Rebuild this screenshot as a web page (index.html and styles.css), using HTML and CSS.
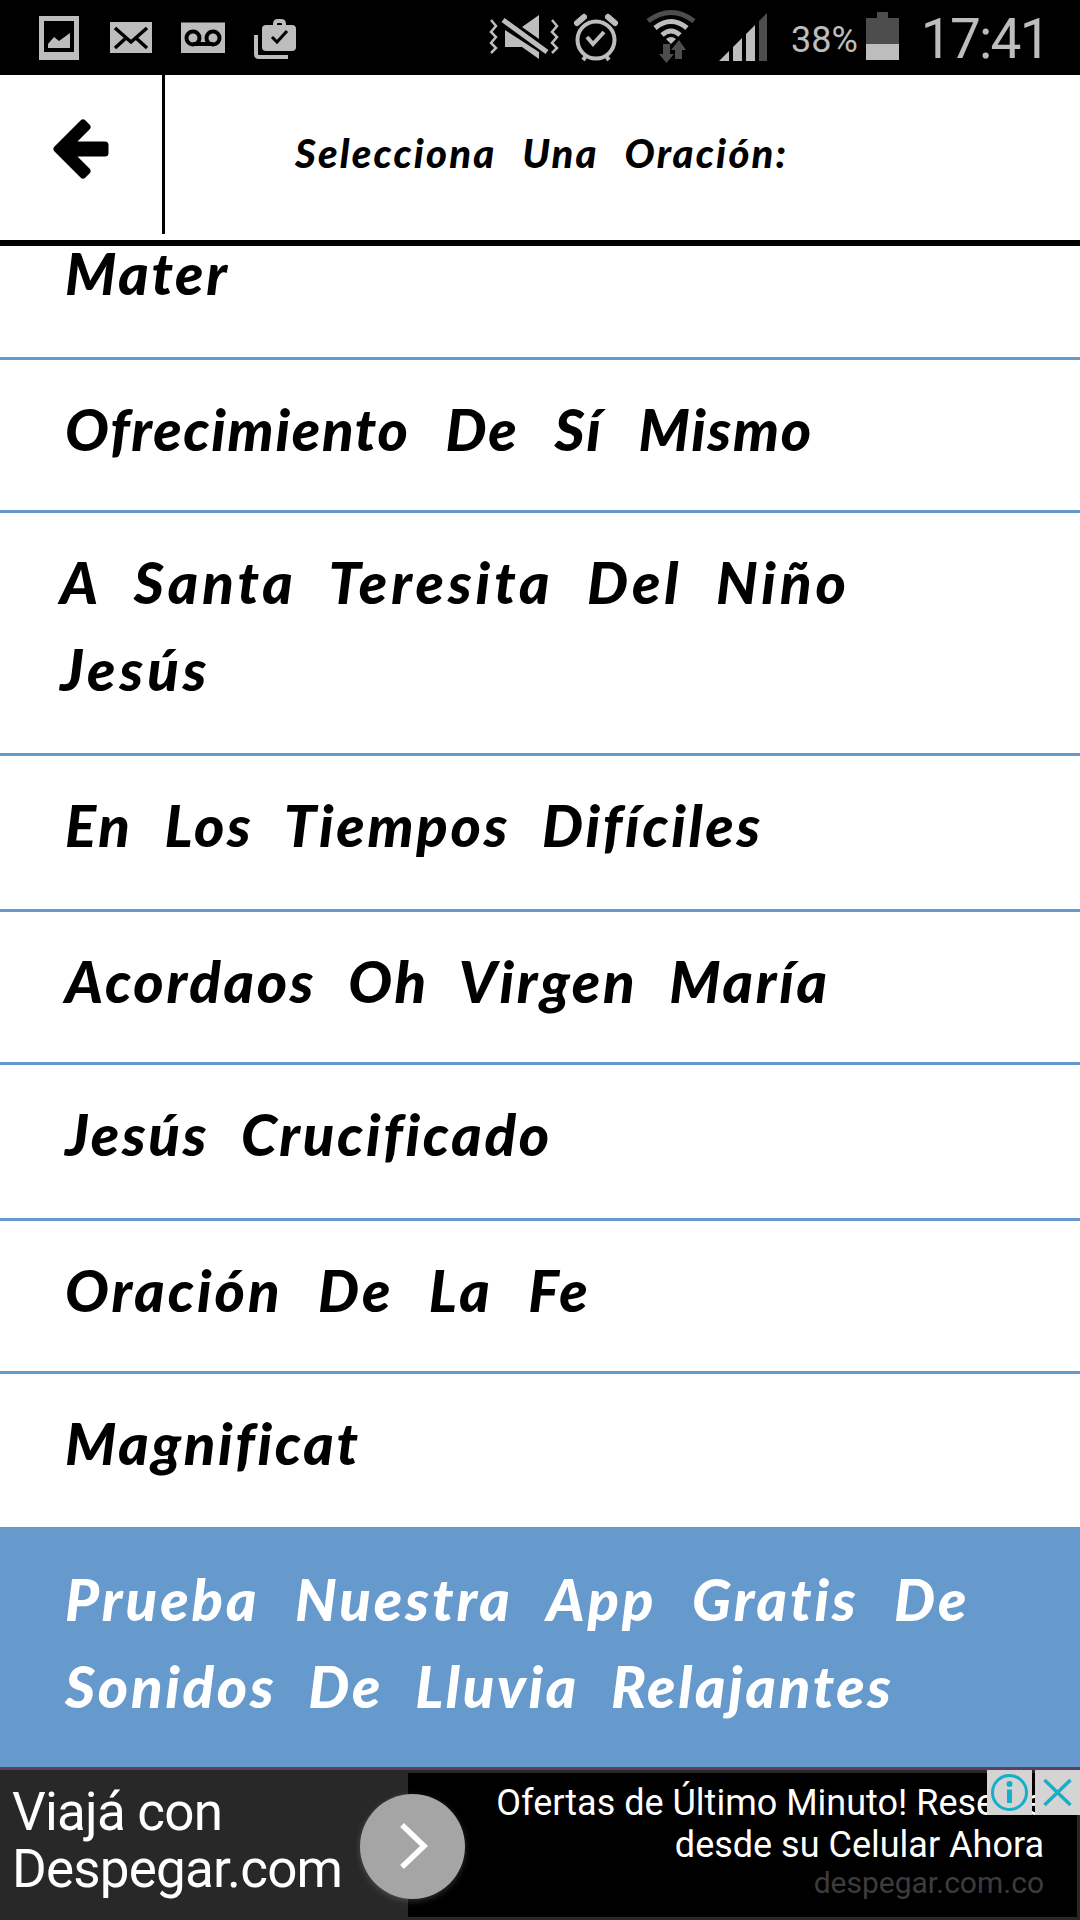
FILE: index.html
```
<!DOCTYPE html>
<html lang="es">
<head>
    <meta charset="UTF-8">
    <meta name="viewport" content="width=device-width, initial-scale=1.0">
    <title>Oraciones</title>
    <link rel="stylesheet" href="styles.css">
</head>
<body>
    <div class="status-bar">
        <svg class="status-left" width="320" height="75" viewBox="0 0 320 75" fill="#bdbdbd">
            <!-- imagen -->
            <path fill-rule="evenodd" d="M39 16h40v44H39zM44 21v31h30V21z"/>
            <path d="M48 44l6-7 5 4 11-8v15H48z"/>
            <!-- correo -->
            <path d="M110 22h42v31h-42z"/>
            <path d="M115 28l16 14 16-14M115 48l11-10M147 48l-11-10" fill="none" stroke="#000" stroke-width="3.5"/>
            <!-- buzón de voz -->
            <path d="M181 22.500h44v30.500h-44z"/>
            <path d="M193 44h20" stroke="#000" stroke-width="4"/>
            <circle cx="193" cy="38" r="6.500" fill="none" stroke="#000" stroke-width="4"/>
            <circle cx="213" cy="38" r="6.500" fill="none" stroke="#000" stroke-width="4"/>
            <!-- tienda -->
            <path d="M256 35v19q0 3 3 3h29" fill="none" stroke="#bdbdbd" stroke-width="4"/>
            <rect x="262" y="25" width="34" height="26" rx="4"/>
            <path d="M275 26v-2q0-3 3-3h3q3 0 3 3v2" fill="none" stroke="#bdbdbd" stroke-width="4"/>
            <path d="M272 37l5 5 10-11" fill="none" stroke="#000" stroke-width="3"/>
        </svg>
        <svg class="status-right" width="287" height="75" viewBox="480 0 287 75" fill="#bdbdbd">
            <!-- vibración / silencio -->
            <path d="M491 20l5 6-5 6 5 5-5 6 5 5-5 5M552 20l5 6-5 6 5 5-5 6 5 5-5 5" fill="none" stroke="#bdbdbd" stroke-width="2.500"/>
            <path d="M505 30v17h17l17 12v-7zM522 27l17-12v24z"/>
            <path d="M503 20l44 32" stroke="#bdbdbd" stroke-width="5"/>
            <!-- alarma -->
            <circle cx="596" cy="40" r="18.500" fill="none" stroke="#bdbdbd" stroke-width="4"/>
            <path d="M587 37l6 7 11-12" fill="none" stroke="#bdbdbd" stroke-width="4"/>
            <path d="M577 23l7-6M615 23l-7-6" stroke="#bdbdbd" stroke-width="6" stroke-linecap="round"/>
            <path d="M586 56l-3 4M606 56l3 4" stroke="#bdbdbd" stroke-width="4"/>
            <!-- wifi -->
            <path d="M648 21q23-17 46 0" fill="none" stroke="#4d4d4d" stroke-width="5"/>
            <path d="M655 28q16-13 32 0M662 35q9-8 18 0" fill="none" stroke="#bdbdbd" stroke-width="5"/>
            <path d="M666 39q5-4 10 0l-5 5z"/>
            <path d="M663 44h7v10h4l-7.500 9-7.500-9h4zM675 59v-9h-4l8-10 7 10h-4v9z" fill="#4d4d4d"/>
            <!-- señal -->
            <path d="M719 61l10-10v10zM733 47l9-9v23h-9zM746 34l9-9v36h-9z"/>
            <path d="M759 61V21l8-8v48z" fill="#4d4d4d"/>
        </svg>
        <span class="battery-text">38%</span>
        <svg class="battery" width="33" height="75" viewBox="0 0 33 75">
            <path d="M0 18h11v-6h11v6h11v26H0z" fill="#4d4d4d"/>
            <path d="M0 44h33v16H0z" fill="#bdbdbd"/>
        </svg>
        <span class="clock">17:41</span>
    </div>

    <header class="header">
        <a class="back">
            <svg width="60" height="62" viewBox="0 0 60 62">
                <path d="M5 31L31 5l4 4-18 18h36v8H17l18 18-4 4z" stroke="#000" stroke-width="7" stroke-linejoin="round"/>
            </svg>
        </a>
        <h1>Selecciona Una Oración:</h1>
    </header>

    <ul class="list">
        <li class="cut">Mater</li>
        <li class="tight">Ofrecimiento De Sí Mismo</li>
        <li class="double wide">A Santa Teresita Del Niño<br>Jesús</li>
        <li class="tall">En Los Tiempos Difíciles</li>
        <li>Acordaos Oh Virgen María</li>
        <li class="tall">Jesús Crucificado</li>
        <li class="airy">Oración De La Fe</li>
        <li class="last">Magnificat</li>
        <li class="promo"><span class="airy">Prueba Nuestra App Gratis De</span><br>Sonidos De Lluvia Relajantes</li>
    </ul>

    <div class="ad">
        <div class="ad-left">Viajá con<br>Despegar.com</div>
        <div class="ad-right">
            <p>Ofertas de Último Minuto! Reserve</p>
            <p>desde su Celular Ahora</p>
            <p class="ad-url">despegar.com.co</p>
        </div>
        <div class="ad-arrow">
            <svg width="105" height="105" viewBox="0 0 105 105">
                <path d="M42 31l22 21-22 21" fill="none" stroke="#fff" stroke-width="5.500"/>
            </svg>
        </div>
        <div class="ad-buttons">
            <svg width="45" height="45" viewBox="0 0 45 45">
                <circle cx="22.500" cy="22.500" r="17" fill="none" stroke="#14afc8" stroke-width="3"/>
                <circle cx="22.500" cy="14" r="3" fill="#14afc8"/>
                <path d="M22.500 19.500v13.500" stroke="#14afc8" stroke-width="5"/>
            </svg>
            <svg width="45" height="45" viewBox="0 0 45 45">
                <path d="M9.500 10l26 25M35.500 10l-26 25" stroke="#14afc8" stroke-width="3.500"/>
            </svg>
        </div>
    </div>
</body>
</html>
```
FILE: styles.css
```
* {
    margin: 0;
    padding: 0;
    box-sizing: border-box;
}

body {
    width: 1080px;
    height: 1920px;
    overflow: hidden;
    background: #fff;
    font-family: Lato, sans-serif;
}

.status-bar {
    height: 75px;
    background: #000;
    color: #bdbdbd;
    font-family: Roboto, sans-serif;
    display: flex;
}

.status-right {
    margin-left: 160px;
}

.battery-text {
    font-size: 36px;
    line-height: 80px;
    margin-left: 24px;
}

.battery {
    margin-left: 8px;
}

.clock {
    font-size: 55px;
    line-height: 78px;
    letter-spacing: -1.8px;
    margin-left: 22px;
}

.header {
    height: 171px;
    border-bottom: 6px solid #000;
    display: flex;
}

.back {
    width: 165px;
    height: 159px;
    border-right: 3px solid #000;
    padding: 43px 0 0 52px;
}

h1 {
    font-size: 40px;
    font-weight: 900;
    font-style: italic;
    line-height: 156px;
    letter-spacing: 2.2px;
    word-spacing: 15px;
    margin-left: 130px;
}

.list {
    height: 1521px;
    list-style: none;
    font-size: 58px;
    font-weight: 900;
    font-style: italic;
    line-height: 87px;
    letter-spacing: 2.7px;
    word-spacing: 17px;
}

.list li {
    height: 153px;
    padding: 25px 0 0 65px;
    border-bottom: 3px solid #6699cc;
    white-space: nowrap;
}

/* primera fila, pegada a la cabecera */
.list .cut {
    height: 114px;
    padding-top: 0;
    line-height: 53px;
}

.list .double {
    height: 243px;
    padding-left: 60px;
}

.list .tall {
    height: 156px;
}

.list .tight {
    letter-spacing: 1.7px;
    word-spacing: 22px;
}

.list .wide {
    letter-spacing: 4px;
}

.list .airy {
    letter-spacing: 3px;
    word-spacing: 20px;
}

.list .last {
    border-bottom: none;
}

.list .promo {
    height: 240px;
    padding-top: 28px;
    border-bottom: none;
    background: #6699cc;
    color: #fff;
}

.ad {
    position: relative;
    height: 153px;
    display: flex;
    background: #282828;
    border-top: 3px solid #5c3f61;
    color: #fff;
    font-family: Roboto, sans-serif;
}

.ad-left {
    width: 408px;
    padding: 14px 0 0 12px;
    font-size: 53px;
    line-height: 57px;
    letter-spacing: -0.8px;
}

.ad-right {
    width: 669px;
    height: 144px;
    margin-top: 3px;
    padding: 9px 33px 0 0;
    background: #000;
    font-size: 36px;
    line-height: 42px;
    text-align: right;
}

.ad-right p {
    white-space: nowrap;
}

.ad-right .ad-url {
    color: #3c3c3c;
    font-size: 30px;
    line-height: 34px;
}

.ad-arrow {
    position: absolute;
    left: 360px;
    top: 24px;
    width: 105px;
    height: 105px;
    border-radius: 50%;
    background: #a5a5a5;
    box-shadow: 0 2px 6px rgba(165, 165, 165, 0.3);
}

.ad-buttons {
    position: absolute;
    right: 0;
    top: 0;
    display: flex;
    gap: 3px;
}

.ad-buttons svg {
    background: #d4d4d4;
}
```
